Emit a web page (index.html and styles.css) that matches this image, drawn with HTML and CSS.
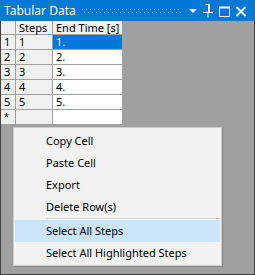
FILE: index.html
```html
<!DOCTYPE html>
<html lang="en">

<head>
    <meta charset="UTF-8">
    <title>Tabular Data</title>
    <link rel="stylesheet" href="styles.css">
</head>

<body>
    <div class="window">
        <div class="titleBar">
            <span class="title">Tabular Data</span>
            <span class="grip"></span>
            <span class="titleButtons">
                <svg width="10" height="21" viewBox="0 0 10 21">
                    <path d="M1 9h8l-4 4z" fill="#fff" />
                </svg>
                <svg width="12" height="21" viewBox="0 0 12 21">
                    <path d="M3.5 4.5h4v7.5M6.5 4.5v7.5M1 12.5h10M6 12.5v5" stroke="#fff" fill="none" />
                    <path d="M7 4v8" stroke="#fff" stroke-width="1.5" />
                </svg>
                <svg width="13" height="21" viewBox="0 0 13 21">
                    <path d="M1.5 7.5h10v9h-10z" stroke="#fff" fill="none" />
                    <path d="M1 7.5h11" stroke="#fff" stroke-width="2" />
                </svg>
                <svg width="12" height="21" viewBox="0 0 12 21">
                    <path d="M1.5 7l9 9M10.5 7l-9 9" stroke="#fff" stroke-width="1.8" />
                </svg>
            </span>
        </div>
        <div class="client">
            <div class="grid">
                <div class="cell head"></div>
                <div class="cell head">Steps</div>
                <div class="cell head">End Time [s]</div>

                <div class="cell head">1</div>
                <div class="cell fixed">1</div>
                <div class="cell selected">1.</div>

                <div class="cell head">2</div>
                <div class="cell fixed">2</div>
                <div class="cell">2.</div>

                <div class="cell head">3</div>
                <div class="cell fixed">3</div>
                <div class="cell">3.</div>

                <div class="cell head">4</div>
                <div class="cell fixed">4</div>
                <div class="cell">4.</div>

                <div class="cell head">5</div>
                <div class="cell fixed">5</div>
                <div class="cell">5.</div>

                <div class="cell head star">*</div>
                <div class="cell fixed"></div>
                <div class="cell"></div>
            </div>

            <!-- context menu -->
            <div class="menu">
                <div class="menuItem">Copy Cell</div>
                <div class="menuItem">Paste Cell</div>
                <div class="menuItem">Export</div>
                <div class="menuItem">Delete Row(s)</div>
                <div class="separator"></div>
                <div class="menuItem hover">Select All Steps</div>
                <div class="menuItem">Select All Highlighted Steps</div>
            </div>
        </div>
    </div>
</body>

</html>
```

FILE: styles.css
```css
* {
    margin: 0;
    padding: 0;
    box-sizing: border-box;
}

body {
    font-family: "Noto Sans", "Open Sans", sans-serif;
    font-size: 11px;
    color: #000;
}

.window {
    width: 255px;
    height: 275px;
    position: relative;
    display: flex;
    flex-direction: column;
    background-color: #a0a0a0;
}

.titleBar {
    height: 21px;
    background-color: #0078d7;
    color: #fff;
    display: flex;
    align-items: center;
    padding-left: 4px;
}

.title {
    font-size: 12px;
    line-height: 21px;
}

.grip {
    flex: 1;
    height: 5px;
    margin: 1px 6px 0 6px;
    background-image:
        radial-gradient(circle at 0.5px 0.5px, #5aa7e4 0.6px, transparent 0.7px),
        radial-gradient(circle at 0.5px 0.5px, #5aa7e4 0.6px, transparent 0.7px);
    background-size: 4px 4px, 4px 4px;
    background-position: 0 0, 2px 3px;
    background-repeat: repeat-x;
}

.titleButtons {
    display: flex;
    gap: 4px;
    padding-right: 8px;
}

.titleButtons svg {
    display: block;
}

.client {
    flex: 1;
    border: 1px solid #424242;
    border-top: 0;
}

.grid {
    display: inline-grid;
    grid-template-columns: 14px 36px 69px;
    grid-template-rows: 13px repeat(6, 14px);
    gap: 1px;
    padding: 0 1px 1px 0;
    background-color: #a0a0a0;
}

.cell {
    background-color: #fff;
    line-height: 14px;
    padding-left: 3px;
    white-space: nowrap;
}

.cell.head,
.cell.fixed {
    background-color: #f0f0f0;
}

.grid .head:nth-child(-n+3) {
    line-height: 13px;
}

.star {
    font-size: 9px;
}

.selected {
    background-color: #0078d7;
    color: #fff;
}

.menu {
    position: absolute;
    left: 13px;
    top: 127px;
    width: 209px;
    height: 139px;
    background-color: #f2f2f2;
    border: 1px solid #cccccc;
    padding: 2px 1px 1px 1px;
    box-shadow: 1px 1px 1px rgba(0, 0, 0, 0.12);
}

.menuItem {
    height: 22px;
    line-height: 22px;
    padding-left: 31px;
    white-space: nowrap;
}

.menuItem.hover {
    background-color: #cce4f7;
}

.separator {
    height: 2px;
    margin-left: 31px;
    border-top: 1px solid #d7d7d7;
}
```
